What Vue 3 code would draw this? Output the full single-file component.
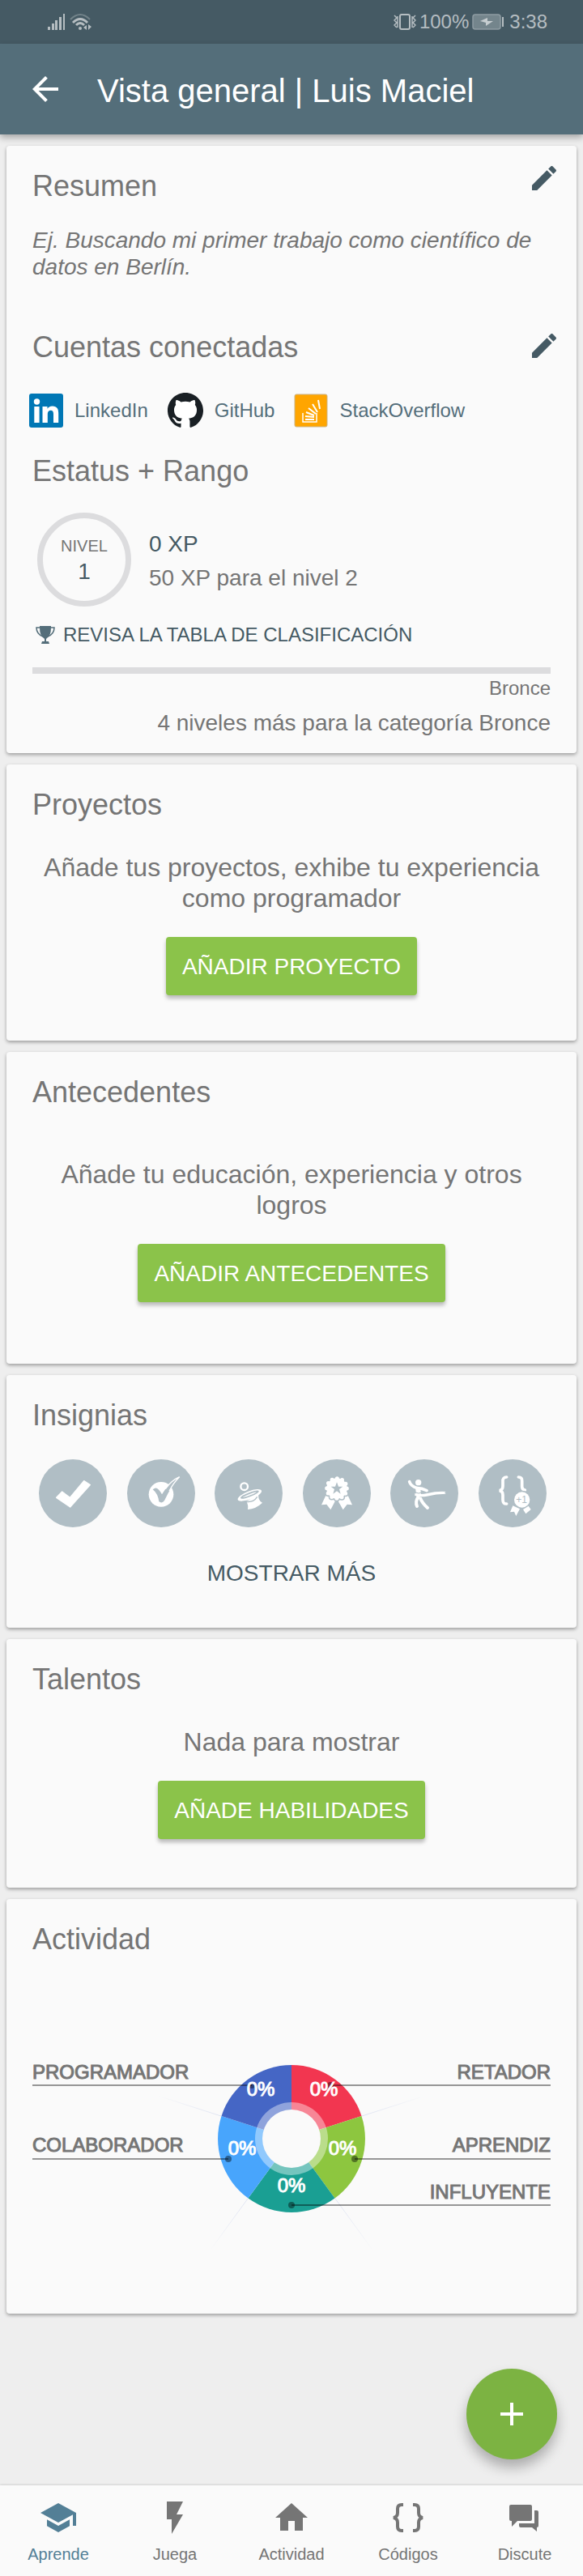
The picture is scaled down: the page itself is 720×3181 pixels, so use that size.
<script setup>
const badges = ['check', 'target', 'hat', 'rosette', 'runner', 'medal']

const sectors = [
  { name: 'RETADOR', color: '#f23650', path: 'M320 211V120A91 91 0 0 1 406.5 182.9Z', tx: 360, ty: 158 },
  { name: 'APRENDIZ', color: '#8dc63f', path: 'M320 211L406.5 182.9A91 91 0 0 1 373.5 284.6Z', tx: 383, ty: 231 },
  { name: 'INFLUYENTE', color: '#1a9f93', path: 'M320 211L373.5 284.6A91 91 0 0 1 266.5 284.6Z', tx: 320, ty: 277 },
  { name: 'COLABORADOR', color: '#48a5fc', path: 'M320 211L266.5 284.6A91 91 0 0 1 233.5 182.9Z', tx: 259, ty: 231 },
  { name: 'PROGRAMADOR', color: '#4566c5', path: 'M320 211L233.5 182.9A91 91 0 0 1 320 120Z', tx: 282, ty: 158 },
]

const callouts = [
  { name: 'PROGRAMADOR', edge: 0, dot: 271, line: 145, text: 137, anchor: 'start' },
  { name: 'COLABORADOR', edge: 0, dot: 242, line: 236, text: 227, anchor: 'start' },
  { name: 'RETADOR', edge: 640, dot: 368, line: 145, text: 137, anchor: 'end' },
  { name: 'APRENDIZ', edge: 640, dot: 398, line: 236, text: 227, anchor: 'end' },
  { name: 'INFLUYENTE', edge: 640, dot: 320, line: 293, text: 285, anchor: 'end' },
]

const tabs = [
  { label: 'Aprende', active: true, box: '0 0 24 24', d: 'M5 13.18v4L12 21l7-3.82v-4L12 17l-7-3.82zM12 3L1 9l11 6 9-4.91V17h2V9L12 3z' },
  { label: 'Juega', box: '0 0 24 24', d: 'M7 2v11h3v9l7-12h-4l4-8z' },
  { label: 'Actividad', box: '0 0 24 24', d: 'M10 20v-6h4v6h5v-8h3L12 3 2 12h3v8z' },
  { label: 'Códigos', box: '0 0 48 48', stroke: true, d: 'M18 8h-2q-5 0-5 5v5q0 5-5 6q5 1 5 6v5q0 5 5 5h2M30 8h2q5 0 5 5v5q0 5 5 6q-5 1-5 6v5q0 5-5 5h-2' },
  { label: 'Discute', box: '0 0 48 48', d: 'M7 8h24q2 0 2 2v16q0 2-2 2H15l-7 7v-7H7q-2 0-2-2V10q0-2 2-2zM36 15h3q2 0 2 2v17q0 2-2 2v5l-6-5H19q-2 0-2-2v-3h19z' },
]

const pencil = 'M3 17.25V21h3.75L17.81 9.94l-3.75-3.75L3 17.25zM20.71 7.04c.39-.39.39-1.02 0-1.41l-2.34-2.34c-.39-.39-1.02-.39-1.41 0l-1.83 1.83 3.75 3.75 1.83-1.83z'
</script>

<template>
  <div class="page">
    <div class="status">
      <svg class="signal" viewBox="0 0 56 22" aria-hidden="true">
        <path d="M0 17h3v4H0zM5 13h3v8H5zM9 9h3v12H9zM14 5h3v16h-3zM19 1h2v20h-2z" fill="currentColor" />
        <path d="M28 8q12-12 24 0" fill="none" stroke="currentColor" stroke-width="2" opacity=".4" />
        <path d="M31 12q9-9 18 0M35 15q5-5 10 0" fill="none" stroke="currentColor" stroke-width="3" />
        <circle cx="40" cy="19" r="2" fill="currentColor" />
        <path d="M44 18l4-3v6zM50 14l4 3-4 4z" fill="currentColor" />
      </svg>
      <div class="status-right">
        <svg class="vibrate" viewBox="0 0 28 22" aria-hidden="true">
          <rect x="8" y="2" width="12" height="18" rx="2" fill="none" stroke="currentColor" stroke-width="2" />
          <path d="M1 3l3 3-3 3 3 3-3 3 3 3M5 4v14M27 3l-3 3 3 3-3 3 3 3-3 3M23 4v14" fill="none" stroke="currentColor" stroke-width="1.5" />
        </svg>
        <span>100%</span>
        <svg class="battery" viewBox="0 0 40 20" aria-hidden="true">
          <rect x="1" y="1" width="34" height="18" rx="3" fill="#74858c" stroke="#8e9ca2" stroke-width="1.5" />
          <path d="M10 9l9-4v4h7l-9 6v-4z" fill="#c6cdd0" />
          <rect x="37" y="4" width="2" height="12" fill="currentColor" />
        </svg>
        <span>3:38</span>
      </div>
    </div>

    <header class="toolbar">
      <button class="icon-btn" aria-label="Volver">
        <svg viewBox="0 0 24 24" width="48" height="48"><path d="M20 11H7.83l5.59-5.59L12 4l-8 8 8 8 1.41-1.41L7.83 13H20v-2z" fill="#fff" /></svg>
      </button>
      <h1>Vista general | Luis Maciel</h1>
    </header>

    <main>
      <section class="card summary">
        <div class="head">
          <h2>Resumen</h2>
          <button class="icon-btn edit" aria-label="Editar resumen">
            <svg viewBox="0 0 24 24" width="40" height="40"><path :d="pencil" fill="#455a64" /></svg>
          </button>
        </div>
        <p class="hint">Ej. Buscando mi primer trabajo como científico de datos en Berlín.</p>

        <div class="head accounts-head">
          <h2>Cuentas conectadas</h2>
          <button class="icon-btn edit" aria-label="Editar cuentas">
            <svg viewBox="0 0 24 24" width="40" height="40"><path :d="pencil" fill="#455a64" /></svg>
          </button>
        </div>
        <div class="accounts">
          <a href="#linkedin">
            <svg viewBox="0 0 42 42" width="42" height="42" aria-hidden="true">
              <rect width="42" height="42" rx="3" fill="#0077b5" />
              <circle cx="9.5" cy="10" r="3.7" fill="#fff" />
              <path d="M6.3 16h6.3v20H6.3zM16.5 16h6v2.7c1-1.8 3.2-3.2 6.2-3.2 6.300 0 7.500 4 7.500 9.500v11H30v-9.800c0-2.400 0-5.400-3.300-5.400s-3.900 2.500-3.900 5.200v10h-6.300z" fill="#fff" />
            </svg>
            LinkedIn
          </a>
          <a href="#github">
            <svg viewBox="0 0 44 44" width="44" height="44" aria-hidden="true">
              <circle cx="22" cy="22" r="22" fill="#fff" />
              <path fill="#191f24" fill-rule="evenodd" d="M22 0C9.850 0 0 9.850 0 22c0 9.720 6.300 17.960 15.040 20.870 1.100.21 1.510-.47 1.510-1.060 0-.52-.02-2.250-.03-4.090-6.120 1.330-7.410-2.600-7.410-2.600-1-2.540-2.440-3.220-2.440-3.220-2-1.360.15-1.340.15-1.340 2.210.16 3.370 2.270 3.370 2.270 1.960 3.370 5.150 2.390 6.410 1.830.2-1.420.77-2.390 1.400-2.940-4.890-.56-10.020-2.440-10.020-10.870 0-2.400.86-4.360 2.270-5.900-.23-.56-.98-2.800.21-5.820 0 0 1.850-.59 6.050 2.250 1.760-.49 3.640-.73 5.510-.74 1.870.01 3.750.25 5.510.74 4.200-2.840 6.040-2.250 6.040-2.250 1.200 3.030.45 5.260.22 5.820 1.410 1.540 2.260 3.500 2.260 5.900 0 8.450-5.150 10.310-10.050 10.850.79.68 1.490 2.020 1.490 4.070 0 2.950-.02 5.320-.02 6.040 0 .59.4 1.280 1.510 1.060C37.710 39.950 44 31.710 44 22 44 9.850 34.150 0 22 0z" />
            </svg>
            GitHub
          </a>
          <a href="#stackoverflow">
            <svg viewBox="0 0 42 42" width="42" height="42" aria-hidden="true">
              <rect x="1" y="1" width="40" height="40" rx="2" fill="#ffa500" stroke="#c9b48a" />
              <g fill="none" stroke="#fff">
                <path d="M11 24v11h17V24" stroke-width="1.5" />
                <path d="M14 32h11M14 28l11 1M15 23l10 4M18 18l9 7M23 13l6 10M30 8l2 11" stroke-width="2" />
              </g>
            </svg>
            StackOverflow
          </a>
        </div>

        <h2 class="rank-title">Estatus + Rango</h2>
        <div class="level">
          <div class="ring"><span>NIVEL</span><strong>1</strong></div>
          <div class="xp"><p class="xp-now">0 XP</p><p>50 XP para el nivel 2</p></div>
        </div>
        <a class="leaderboard" href="#clasificacion">
          <svg viewBox="0 0 24 24" width="24" height="24" aria-hidden="true">
            <path d="M5 1h14v2q0 10-5 13l-1 1v3h3l1 3H7l1-3h3v-3l-1-1Q5 13 5 3z" fill="#546e7a" />
            <path d="M5 3H1q0 8 8 11M19 3h4q0 8-8 11" fill="none" stroke="#546e7a" stroke-width="1.5" />
          </svg>
          REVISA LA TABLA DE CLASIFICACIÓN
        </a>
        <div class="bar" role="progressbar" aria-valuenow="0" aria-valuemin="0" aria-valuemax="4" aria-label="Bronce"></div>
        <p class="rank">Bronce</p>
        <p class="remaining">4 niveles más para la categoría Bronce</p>
      </section>

      <section class="card projects">
        <h2>Proyectos</h2>
        <p class="empty">Añade tus proyectos, exhibe tu experiencia como programador</p>
        <button class="primary">AÑADIR PROYECTO</button>
      </section>

      <section class="card background">
        <h2>Antecedentes</h2>
        <p class="empty">Añade tu educación, experiencia y otros logros</p>
        <button class="primary">AÑADIR ANTECEDENTES</button>
      </section>

      <section class="card achievements">
        <h2>Insignias</h2>
        <div class="badges">
          <svg v-for="b in badges" :key="b" viewBox="0 0 252 252" aria-hidden="true">
            <circle cx="126" cy="126" r="126" fill="#b0bec5" />
            <path v-if="b === 'check'" d="M65 142l21-22 29 22 52-62 23 15-74 82z" fill="#fff" stroke="#fff" stroke-width="4" stroke-linejoin="round" />
            <g v-else-if="b === 'target'">
              <circle cx="126" cy="130" r="46" fill="#fff" />
              <path d="M95 112q10-8 16-4 8 4 18 22 22-40 65-65-30 32-56 88-8 12-20 4-4-30-23-45z" fill="#b0bec5" />
              <path d="M142 110q20-30 52-45-24 24-38 53" fill="none" stroke="#fff" stroke-width="4" />
            </g>
            <g v-else-if="b === 'hat'">
              <circle cx="110" cy="101" r="13" fill="none" stroke="#fff" stroke-width="7" />
              <path d="M118 156q8 14 5 30 30-2 54-25-18-10-14-33z" fill="#fff" />
              <ellipse cx="130" cy="133" rx="47" ry="15" transform="rotate(-21 130 133)" fill="#fff" />
              <ellipse cx="130" cy="131" rx="34" ry="5" transform="rotate(-21 130 131)" fill="none" stroke="#b0bec5" stroke-width="5" />
              <path d="M116 157q28 4 42-18" fill="none" stroke="#b0bec5" stroke-width="4" />
            </g>
            <g v-else-if="b === 'rosette'">
              <path d="M85 134l-16 35 19-2 15 20 22-42 24 42 15-20 19 2-16-35z" fill="#fff" />
              <circle cx="126" cy="108" r="37" fill="none" stroke="#b0bec5" stroke-width="24" stroke-linecap="round" stroke-dasharray="0 19.37" />
              <path d="M126 148l-10 24h20z" fill="#b0bec5" />
              <circle cx="126" cy="108" r="38" fill="#fff" />
              <circle cx="126" cy="108" r="37" fill="none" stroke="#fff" stroke-width="15" stroke-linecap="round" stroke-dasharray="0 19.37" />
              <path d="M126 85l6 16h16l-13 10 5 17-14-10-14 10 5-17-13-10h16z" fill="#b0bec5" />
            </g>
            <g v-else-if="b === 'runner'" fill="none" stroke="#fff" stroke-linecap="round" stroke-linejoin="round">
              <circle cx="104" cy="86" r="11" fill="#fff" stroke="none" />
              <path d="M71 83q4 16 30 24 16 0 34 9" stroke-width="11" />
              <path d="M103 112l2 20" stroke-width="18" />
              <path d="M102 142q-10 16-3 32M112 146q6 16 26 34" stroke-width="12" />
              <path d="M91 126q20 6 46 0 34-8 69-6l-5 4 5 4q-36 0-70 9-24 4-45-2z" fill="#fff" stroke="none" />
              <path d="M90 122q14 8 30 1" stroke="#b0bec5" stroke-width="3" />
            </g>
            <g v-else>
              <path d="M104 66q-15 0-14 16v18q0 14-13 16 13 2 13 16v18q0 16 14 15M148 66q14 0 13 15v20q0 11 11 13" fill="none" stroke="#fff" stroke-width="11" stroke-linecap="round" />
              <circle cx="161" cy="150" r="34" fill="#b0bec5" />
              <circle cx="161" cy="150" r="29" fill="#fff" />
              <text x="159" y="163" text-anchor="middle" class="plus-one">+1</text>
              <path d="M127 172l-10 24 15-2 7 16 14-26zM165 186l10 16 19-16-9-13z" fill="#fff" />
            </g>
          </svg>
        </div>
        <button class="more">MOSTRAR MÁS</button>
      </section>

      <section class="card talents">
        <h2>Talentos</h2>
        <p class="empty">Nada para mostrar</p>
        <button class="primary">AÑADE HABILIDADES</button>
      </section>

      <section class="card activity">
        <h2>Actividad</h2>
        <svg class="chart" viewBox="0 0 640 422" role="img" aria-label="Actividad">
          <defs>
            <radialGradient id="spoke" gradientUnits="userSpaceOnUse" cx="320" cy="211" r="173">
              <stop offset="50%" stop-color="#4566c5" stop-opacity=".16" />
              <stop offset="100%" stop-color="#4566c5" stop-opacity="0" />
            </radialGradient>
          </defs>
          <path d="M233 183L155 158M407 183l78-25M266 285l-48 66M374 285l48 66" stroke="url(#spoke)" fill="none" />
          <path v-for="s in sectors" :key="s.name" :d="s.path" :fill="s.color" />
          <circle cx="320" cy="211" r="45" fill="#fff" fill-opacity=".4" />
          <circle cx="320" cy="211" r="36" fill="#fafafa" />
          <g v-for="c in callouts" :key="c.name">
            <line :x1="c.edge" :x2="c.dot" :y1="c.line" :y2="c.line" stroke="#000" stroke-opacity=".4" stroke-width="2" />
            <circle :cx="c.dot" :cy="c.line" r="4" fill="#000" fill-opacity=".42" />
            <text class="label" :x="c.edge" :y="c.text" :text-anchor="c.anchor">{{ c.name }}</text>
          </g>
          <text v-for="s in sectors" :key="s.name" class="percent" :x="s.tx" :y="s.ty" text-anchor="middle">0%</text>
        </svg>
      </section>
    </main>

    <div class="fab-row">
      <button class="fab" aria-label="Añadir">
        <svg viewBox="0 0 24 24" width="48" height="48"><path d="M19 13h-6v6h-2v-6H5v-2h6V5h2v6h6v2z" fill="#fff" /></svg>
      </button>
    </div>

    <nav class="tabs">
      <a v-for="t in tabs" :key="t.label" href="#" :class="{ active: t.active }">
        <svg :viewBox="t.box" width="48" height="48" aria-hidden="true">
          <path v-if="t.stroke" :d="t.d" fill="none" stroke="currentColor" stroke-width="4" />
          <path v-else :d="t.d" fill="currentColor" />
        </svg>
        {{ t.label }}
      </a>
    </nav>
  </div>
</template>

<style>
body {
  background: #eee;
}
</style>

<style scoped>
.page {
  min-height: 100vh;
  display: flex;
  flex-direction: column;
  background: #eee;
  color: #757575;
  font-family: "Liberation Sans", Arial, sans-serif;
}
h1, h2, p {
  margin: 0;
  font-weight: 400;
}
a {
  color: inherit;
  text-decoration: none;
}
svg {
  display: block;
  flex: none;
}
button {
  padding: 0;
  border: 0;
  background: none;
  font-family: inherit;
  cursor: pointer;
}
.status {
  height: 54px;
  padding: 0 44px 0 59px;
  display: flex;
  align-items: center;
  justify-content: space-between;
  background: #455a64;
  color: #b5bdc1;
  font-size: 24px;
}
.signal {
  width: 56px;
  height: 22px;
}
.status-right {
  display: flex;
  align-items: center;
  gap: 4px;
}
.vibrate {
  width: 28px;
  height: 22px;
}
.battery {
  width: 40px;
  height: 20px;
  margin-right: 2px;
}
.toolbar {
  position: relative;
  height: 112px;
  padding: 0 32px;
  display: flex;
  align-items: center;
  gap: 40px;
  background: #546e7a;
  box-shadow: 0 4px 8px rgba(0, 0, 0, 0.3);
}
h1 {
  padding-top: 4px;
  color: #fff;
  font-size: 40px;
  line-height: 44px;
}
main {
  padding: 14px 8px 0;
  display: flex;
  flex-direction: column;
  gap: 14px;
}
.card {
  padding: 30px 32px 0;
  display: flex;
  flex-direction: column;
  background: #fafafa;
  border-radius: 4px;
  box-shadow: 0 2px 4px rgba(0, 0, 0, 0.34);
}
h2 {
  font-size: 36px;
  line-height: 40px;
}
.summary {
  padding-top: 20px;
  padding-bottom: 20px;
  font-size: 28px;
}
.head {
  display: flex;
  align-items: flex-start;
  justify-content: space-between;
}
.head h2 {
  padding-top: 10px;
}
.edit {
  margin-right: -12px;
}
.hint {
  margin-top: 30px;
  font-style: italic;
  line-height: 33px;
}
.accounts-head {
  margin-top: 61px;
}
.accounts-head h2 {
  padding-top: 2px;
}
.accounts {
  margin: 36px 0 0 -4px;
  display: flex;
  gap: 24px;
  color: #546e7a;
  font-size: 24px;
}
.accounts a {
  height: 44px;
  display: flex;
  align-items: center;
  gap: 14px;
}
.rank-title {
  margin-top: 33px;
}
.level {
  margin: 31px 0 0 6px;
  display: flex;
  align-items: center;
  gap: 22px;
}
.ring {
  box-sizing: border-box;
  width: 116px;
  height: 116px;
  padding-top: 2px;
  border: 7px solid #dcdcde;
  border-radius: 50%;
  display: flex;
  flex-direction: column;
  align-items: center;
  justify-content: center;
  gap: 4px;
  font-size: 20px;
  line-height: 24px;
}
.ring strong {
  color: #455a64;
  font-size: 28px;
  font-weight: 400;
  line-height: 32px;
}
.xp {
  padding-top: 4px;
  line-height: 42px;
}
.xp-now {
  color: #455a64;
}
.leaderboard {
  margin: 21px 0 0 4px;
  display: flex;
  align-items: center;
  gap: 10px;
  color: #455a64;
  font-size: 24px;
  line-height: 28px;
}
.bar {
  height: 8px;
  margin-top: 26px;
  background: #dcdcde;
}
.rank {
  margin-top: 4px;
  text-align: right;
  font-size: 24px;
  line-height: 28px;
}
.remaining {
  margin-top: 12px;
  text-align: right;
  line-height: 34px;
}
.empty {
  margin-top: 38px;
  text-align: center;
  font-size: 32px;
  line-height: 38px;
}
.primary {
  align-self: center;
  height: 72px;
  margin-top: 29px;
  padding: 2px 20px 0;
  border-radius: 4px;
  background: #8bc34a;
  box-shadow: 0 4px 5px rgba(0, 0, 0, 0.26);
  color: #fff;
  font-size: 28px;
}
.projects {
  padding-bottom: 56px;
}
.background {
  padding-bottom: 76px;
}
.background .empty {
  margin-top: 62px;
}
.talents {
  padding-bottom: 60px;
}
.achievements {
  padding-bottom: 32px;
}
.badges {
  margin: 34px 5px 0 8px;
  display: flex;
  justify-content: space-between;
}
.badges svg {
  width: 84px;
  height: 84px;
}
.plus-one {
  fill: #b0bec5;
  font-size: 36px;
}
.more {
  align-self: center;
  height: 72px;
  margin-top: 20px;
  padding-top: 2px;
  color: #455a64;
  font-size: 28px;
}
.activity {
  padding-bottom: 5px;
}
.chart {
  width: 100%;
  margin-top: 15px;
  font-size: 24px;
}
.label {
  fill: #757575;
  stroke: #757575;
}
.percent {
  fill: #fff;
  stroke: #fff;
}
.fab-row {
  padding: 68px 32px 32px;
  display: flex;
  justify-content: flex-end;
}
.fab {
  width: 112px;
  height: 112px;
  display: flex;
  align-items: center;
  justify-content: center;
  border-radius: 50%;
  background: #7cb342;
  box-shadow: 0 10px 16px rgba(0, 0, 0, 0.28);
}
.tabs {
  height: 112px;
  display: flex;
  background: #fafafa;
  box-shadow: 0 -1px 2px rgba(0, 0, 0, 0.12);
}
.tabs a {
  flex: 1;
  padding-top: 16px;
  display: flex;
  flex-direction: column;
  align-items: center;
  gap: 11px;
  color: #757575;
  font-size: 20px;
  line-height: 20px;
}
.tabs a.active {
  color: #537f96;
}
</style>
